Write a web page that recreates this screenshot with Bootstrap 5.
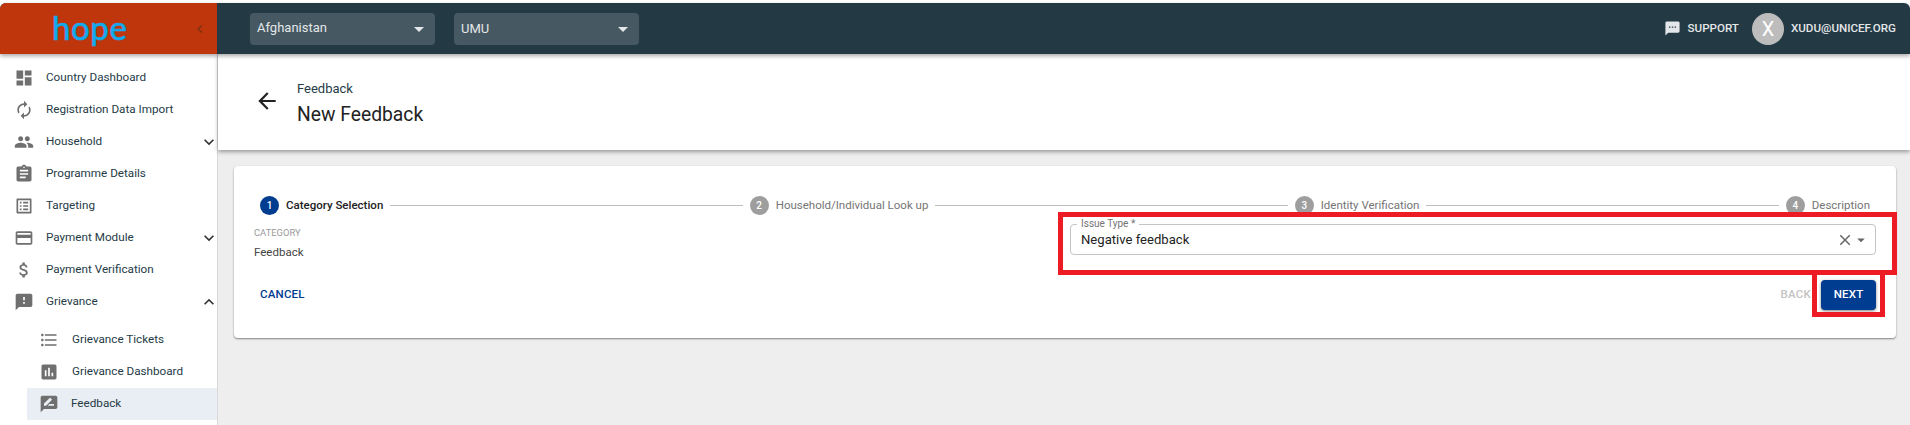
<!DOCTYPE html>
<html lang="en">
<head>
  <meta charset="UTF-8" />
  <title>New Feedback</title>
  <link href="https://cdn.jsdelivr.net/npm/bootstrap@5.3.0/dist/css/bootstrap.min.css" rel="stylesheet" />
  <style>
    html, body { height: 425px; overflow: hidden; }
    body { font-family: Roboto, "Liberation Sans", sans-serif; background: #fff; color: #253b46; padding-top: 3px; position: relative; }
    svg { fill: currentColor; flex-shrink: 0; display: block; }

    /* top bar */
    .top-bar { height: 51px; background: #233944; color: #e4e7e9; border-radius: 6px 6px 0 0; box-shadow: 0 2px 4px rgba(0,0,0,.35); position: relative; z-index: 3; }
    .logo-box { width: 217px; height: 100%; background: #bf360c; border-radius: 6px 0 0 0; padding-left: 52px; padding-right: 9px; }
    .logo-word { font-family: Lato, sans-serif; font-weight: 400; font-size: 33px; line-height: 1; color: #12a9ee; -webkit-text-stroke: .7px #12a9ee; letter-spacing: .6px; margin-top: -3px; }
    .collapse-arrow { color: #7a3114; margin-left: auto; }
    .top-select { height: 32px; width: 185px; background: #465861; border-radius: 4px; padding: 0 4px 0 7px; font-size: 13px; }
    .select-one { margin-left: 33px; }
    .select-two { margin-left: 19px; }
    .select-one .pick-label { margin-top: -2px; }
    .support-text { font-size: 11.6px; font-weight: 500; }
    .avatar-dot { width: 32px; height: 32px; border-radius: 50%; background: #bdbdbd; color: #fff; font-size: 20px; margin-left: 13px; }
    .support-gap { margin-left: 7px; }
    .top-right { padding-right: 14px; }

    /* sidebar */
    .layout-row { height: 371px; }
    .side-menu { width: 218px; border-right: 1px solid #d9d9d9; background: #fff; padding-top: 8px; flex-shrink: 0; }
    .menu-item { height: 32px; color: #253b46; font-size: 11.7px; font-weight: 400; padding-left: 14px; }
    .menu-item svg.lead-icon { color: #6f6f6f; margin-right: 12px; }
    .menu-item .side-chevron { color: #333; margin-left: auto; margin-right: -2px; }
    .menu-sub { padding-left: 39px; }
    .menu-sub svg.lead-icon { margin-right: 13px; }
    .menu-gap { height: 6px; }
    .menu-active { background: #e9eef5; margin-left: 27px; padding-left: 12px; }

    /* main */
    .main-area { background: #eee; min-width: 0; }
    .page-head { height: 96px; background: #fff; box-shadow: 0 2px 4px rgba(0,0,0,.35); padding-left: 36px; }
    .back-arrow { color: #222; margin-right: 17px; margin-top: -2px; }
    .crumb-text { font-size: 13px; font-weight: 400; color: #253b46; line-height: 16px; margin-top: 4px; }
    .head-title { font-size: 19.3px; font-weight: 400; color: #222; line-height: 26px; margin: 5px 0 0; }
    .form-panel { background: #fff; margin: 16px 14px 0 16px; height: 172px; border-radius: 4px; box-shadow: 0 1px 2px rgba(0,0,0,.45); padding: 30px 0 0; }

    /* stepper */
    .step-row { padding: 0 26px; height: 19px; font-size: 11.5px; }
    .step-num { width: 19px; height: 19px; border-radius: 50%; background: #9e9e9e; color: #fff; font-size: 10px; font-weight: 500; }
    .step-on .step-num { background: #003c8f; }
    .step-name { margin-left: 7px; color: #757575; }
    .step-on .step-name { color: #222; font-weight: 500; }
    .step-line { flex: 1; border-top: 1px solid #bdbdbd; margin: 0 7px; }

    /* form */
    .panel-grid { padding: 0 20px; margin-top: 10px; }
    .cat-label { font-size: 9.4px; color: #9a9a9a; line-height: 12px; margin-top: 2px; }
    .cat-value { font-size: 11.5px; color: #444; line-height: 16px; margin-top: 5px; }
    .issue-field { width: 806px; height: 31px; border: 1px solid #c4c4c4; border-radius: 4px; margin-top: -1px; padding: 0 5px 0 10px; position: relative; font-size: 13.1px; color: #222; }
    .issue-legend { position: absolute; top: -7px; left: 6px; background: #fff; padding: 0 4px; font-size: 10px; line-height: 12px; color: #757575; }
    .issue-tools { color: #666; margin-left: auto; }
    .clear-icon { margin-right: -2px; }
    .panel-actions { padding: 0 20px 0 26px; margin-top: 20px; }
    .act-cancel { font-size: 11.5px; font-weight: 500; color: #003c8f; letter-spacing: .2px; margin-top: -1px; }
    .act-back { font-size: 11.5px; font-weight: 500; color: #c4c4c4; letter-spacing: .2px; margin-right: 10px; }
    .act-next { width: 55px; height: 30px; background: #003c8f; color: #fff; font-size: 11.5px; font-weight: 500; letter-spacing: .2px; border-radius: 4px; box-shadow: 0 1px 3px rgba(0,0,0,.5); padding: 0; border: 0; }

    /* red annotation boxes from the screenshot */
    .mark-box { position: absolute; border: 5px solid #ed1c24; z-index: 5; pointer-events: none; }
    .mark-field { left: 1058px; top: 212px; width: 839px; height: 63px; }
    .mark-next { left: 1812px; top: 275px; width: 73px; height: 42px; border-top: 0; }
  </style>
</head>
<body>

<!-- Top bar -->
<div class="top-bar d-flex align-items-center">
  <div class="logo-box d-flex align-items-center">
    <span class="logo-word">hope</span>
    <svg class="collapse-arrow" width="16" height="16" viewBox="0 0 24 24"><path d="M15.41 7.41L14 6l-6 6 6 6 1.41-1.41L10.83 12z"/></svg>
  </div>
  <div class="top-select select-one d-flex align-items-center justify-content-between">
    <span class="pick-label">Afghanistan</span>
    <svg width="24" height="24" viewBox="0 0 24 24"><path d="M7 10l5 5 5-5z"/></svg>
  </div>
  <div class="top-select select-two d-flex align-items-center justify-content-between">
    <span class="pick-label">UMU</span>
    <svg width="24" height="24" viewBox="0 0 24 24"><path d="M7 10l5 5 5-5z"/></svg>
  </div>
  <div class="top-right d-flex align-items-center ms-auto">
    <svg width="17" height="17" viewBox="0 0 24 24"><path d="M20 2H4c-1.1 0-1.99.9-1.99 2L2 22l4-4h14c1.1 0 2-.9 2-2V4c0-1.1-.9-2-2-2zM9 11H7V9h2v2zm4 0h-2V9h2v2zm4 0h-2V9h2v2z"/></svg>
    <span class="support-text support-gap">SUPPORT</span>
    <div class="avatar-dot d-flex align-items-center justify-content-center">X</div>
    <span class="support-text support-gap">XUDU@UNICEF.ORG</span>
  </div>
</div>

<div class="layout-row d-flex">
  <!-- Sidebar -->
  <div class="side-menu">
    <div class="menu-item d-flex align-items-center">
      <svg class="lead-icon" width="20" height="20" viewBox="0 0 24 24"><path d="M3 13h8V3H3v10zm0 8h8v-6H3v6zm10 0h8V11h-8v10zm0-18v6h8V3h-8z"/></svg>Country Dashboard
    </div>
    <div class="menu-item d-flex align-items-center">
      <svg class="lead-icon" width="20" height="20" viewBox="0 0 24 24"><path d="M12 6v3l4-4-4-4v3c-4.42 0-8 3.58-8 8 0 1.57.46 3.03 1.24 4.26L6.7 14.8c-.45-.83-.7-1.79-.7-2.8 0-3.31 2.69-6 6-6zm6.76 1.74L17.3 9.2c.44.84.7 1.79.7 2.8 0 3.31-2.69 6-6 6v-3l-4 4 4 4v-3c4.42 0 8-3.58 8-8 0-1.57-.46-3.03-1.24-4.26z"/></svg>Registration Data Import
    </div>
    <div class="menu-item d-flex align-items-center">
      <svg class="lead-icon" width="20" height="20" viewBox="0 0 24 24"><path d="M16 11c1.66 0 2.99-1.34 2.99-3S17.66 5 16 5c-1.66 0-3 1.34-3 3s1.34 3 3 3zm-8 0c1.66 0 2.99-1.34 2.99-3S9.66 5 8 5C6.34 5 5 6.34 5 8s1.34 3 3 3zm0 2c-2.33 0-7 1.17-7 3.5V19h14v-2.5c0-2.33-4.67-3.5-7-3.5zm8 0c-.29 0-.62.02-.97.05 1.16.84 1.97 1.97 1.97 3.45V19h6v-2.5c0-2.33-4.67-3.5-7-3.5z"/></svg>Household
      <svg class="side-chevron" width="20" height="20" viewBox="0 0 24 24"><path d="M16.59 8.59L12 13.17 7.41 8.59 6 10l6 6 6-6z"/></svg>
    </div>
    <div class="menu-item d-flex align-items-center">
      <svg class="lead-icon" width="20" height="20" viewBox="0 0 24 24"><path d="M19 3h-4.18C14.4 1.84 13.3 1 12 1c-1.3 0-2.4.84-2.82 2H5c-1.1 0-2 .9-2 2v14c0 1.1.9 2 2 2h14c1.1 0 2-.9 2-2V5c0-1.1-.9-2-2-2zm-7 0c.55 0 1 .45 1 1s-.45 1-1 1-1-.45-1-1 .45-1 1-1zm2 14H7v-2h7v2zm3-4H7v-2h10v2zm0-4H7V7h10v2z"/></svg>Programme Details
    </div>
    <div class="menu-item d-flex align-items-center">
      <svg class="lead-icon" width="20" height="20" viewBox="0 0 24 24"><path d="M19 5v14H5V5h14m1.1-2H3.9c-.5 0-.9.4-.9.9v16.2c0 .4.4.9.9.9h16.2c.4 0 .9-.5.9-.9V3.9c0-.5-.5-.9-.9-.9zM11 7h6v2h-6V7zm0 4h6v2h-6v-2zm0 4h6v2h-6zM7 7h2v2H7zm0 4h2v2H7zm0 4h2v2H7z"/></svg>Targeting
    </div>
    <div class="menu-item d-flex align-items-center">
      <svg class="lead-icon" width="20" height="20" viewBox="0 0 24 24"><path d="M20 4H4c-1.11 0-1.99.89-1.99 2L2 18c0 1.11.89 2 2 2h16c1.11 0 2-.89 2-2V6c0-1.11-.89-2-2-2zm0 14H4v-6h16v6zm0-10H4V6h16v2z"/></svg>Payment Module
      <svg class="side-chevron" width="20" height="20" viewBox="0 0 24 24"><path d="M16.59 8.59L12 13.17 7.41 8.59 6 10l6 6 6-6z"/></svg>
    </div>
    <div class="menu-item d-flex align-items-center">
      <svg class="lead-icon" width="20" height="20" viewBox="0 0 24 24"><path d="M11.8 10.9c-2.27-.59-3-1.2-3-2.15 0-1.09 1.01-1.85 2.7-1.85 1.78 0 2.44.85 2.5 2.1h2.21c-.07-1.72-1.12-3.3-3.21-3.81V3h-3v2.16c-1.94.42-3.5 1.68-3.5 3.61 0 2.31 1.91 3.46 4.7 4.13 2.5.6 3 1.48 3 2.41 0 .69-.49 1.79-2.7 1.79-2.06 0-2.87-.92-2.98-2.1h-2.2c.12 2.19 1.76 3.42 3.68 3.83V21h3v-2.15c1.95-.37 3.5-1.5 3.5-3.55 0-2.84-2.43-3.81-4.7-4.4z"/></svg>Payment Verification
    </div>
    <div class="menu-item d-flex align-items-center">
      <svg class="lead-icon" width="20" height="20" viewBox="0 0 24 24"><path d="M20 2H4c-1.1 0-1.99.9-1.99 2L2 22l4-4h14c1.1 0 2-.9 2-2V4c0-1.1-.9-2-2-2zm-7 12h-2v-2h2v2zm0-4h-2V6h2v4z"/></svg>Grievance
      <svg class="side-chevron" width="20" height="20" viewBox="0 0 24 24"><path d="M12 8l-6 6 1.41 1.41L12 10.83l4.59 4.58L18 14z"/></svg>
    </div>
    <div class="menu-gap"></div>
    <div class="menu-item menu-sub d-flex align-items-center">
      <svg class="lead-icon" width="20" height="20" viewBox="0 0 24 24"><path d="M4 10.5c-.83 0-1.5.67-1.5 1.5s.67 1.5 1.5 1.5 1.5-.67 1.5-1.5-.67-1.5-1.5-1.5zm0-6c-.83 0-1.5.67-1.5 1.5S3.17 7.5 4 7.5 5.5 6.83 5.5 6 4.83 4.5 4 4.5zm0 12c-.83 0-1.5.68-1.5 1.5s.68 1.5 1.5 1.5 1.5-.68 1.5-1.5-.67-1.5-1.5-1.5zM7 19h14v-2H7v2zm0-6h14v-2H7v2zm0-8v2h14V5H7z"/></svg>Grievance Tickets
    </div>
    <div class="menu-item menu-sub d-flex align-items-center">
      <svg class="lead-icon" width="20" height="20" viewBox="0 0 24 24"><path d="M19 3H5c-1.1 0-2 .9-2 2v14c0 1.1.9 2 2 2h14c1.1 0 2-.9 2-2V5c0-1.1-.9-2-2-2zM9 17H7v-7h2v7zm4 0h-2V7h2v10zm4 0h-2v-4h2v4z"/></svg>Grievance Dashboard
    </div>
    <div class="menu-item menu-active d-flex align-items-center">
      <svg class="lead-icon" width="20" height="20" viewBox="0 0 24 24"><path d="M20 2H4c-1.1 0-1.99.9-1.99 2L2 22l4-4h14c1.1 0 2-.9 2-2V4c0-1.1-.9-2-2-2zM6 14v-2.47l6.88-6.88c.2-.2.51-.2.71 0l1.77 1.77c.2.2.2.51 0 .71L8.47 14H6zm12 0h-7.5l2-2H18v2z"/></svg>Feedback
    </div>
  </div>

  <!-- Main -->
  <div class="main-area flex-grow-1">
    <div class="page-head d-flex align-items-center">
      <svg class="back-arrow" width="26" height="26" viewBox="0 0 24 24"><path d="M20 11H7.83l5.59-5.59L12 4l-8 8 8 8 1.41-1.41L7.83 13H20v-2z"/></svg>
      <div>
        <div class="crumb-text">Feedback</div>
        <h1 class="head-title">New Feedback</h1>
      </div>
    </div>

    <div class="form-panel">
      <div class="step-row d-flex align-items-center">
        <div class="step-on d-flex align-items-center">
          <div class="step-num d-flex align-items-center justify-content-center">1</div>
          <span class="step-name">Category Selection</span>
        </div>
        <div class="step-line"></div>
        <div class="d-flex align-items-center">
          <div class="step-num d-flex align-items-center justify-content-center">2</div>
          <span class="step-name">Household/Individual Look up</span>
        </div>
        <div class="step-line"></div>
        <div class="d-flex align-items-center">
          <div class="step-num d-flex align-items-center justify-content-center">3</div>
          <span class="step-name">Identity Verification</span>
        </div>
        <div class="step-line"></div>
        <div class="d-flex align-items-center">
          <div class="step-num d-flex align-items-center justify-content-center">4</div>
          <span class="step-name">Description</span>
        </div>
      </div>

      <div class="panel-grid d-flex justify-content-between">
        <div>
          <div class="cat-label">CATEGORY</div>
          <div class="cat-value">Feedback</div>
        </div>
        <div class="issue-field d-flex align-items-center">
          <span class="issue-legend">Issue Type *</span>
          Negative feedback
          <div class="issue-tools d-flex align-items-center">
            <svg class="clear-icon" width="18" height="18" viewBox="0 0 24 24"><path d="M19 6.41L17.59 5 12 10.59 6.41 5 5 6.41 10.59 12 5 17.59 6.41 19 12 13.41 17.59 19 19 17.59 13.41 12z"/></svg>
            <svg width="18" height="18" viewBox="0 0 24 24"><path d="M7 10l5 5 5-5z"/></svg>
          </div>
        </div>
      </div>

      <div class="panel-actions d-flex align-items-center justify-content-between">
        <span class="act-cancel">CANCEL</span>
        <div class="d-flex align-items-center">
          <span class="act-back">BACK</span>
          <button type="button" class="btn act-next">NEXT</button>
        </div>
      </div>
    </div>
  </div>
</div>

<!-- Red annotation boxes -->
<div class="mark-box mark-field"></div>
<div class="mark-box mark-next"></div>

</body>
</html>
